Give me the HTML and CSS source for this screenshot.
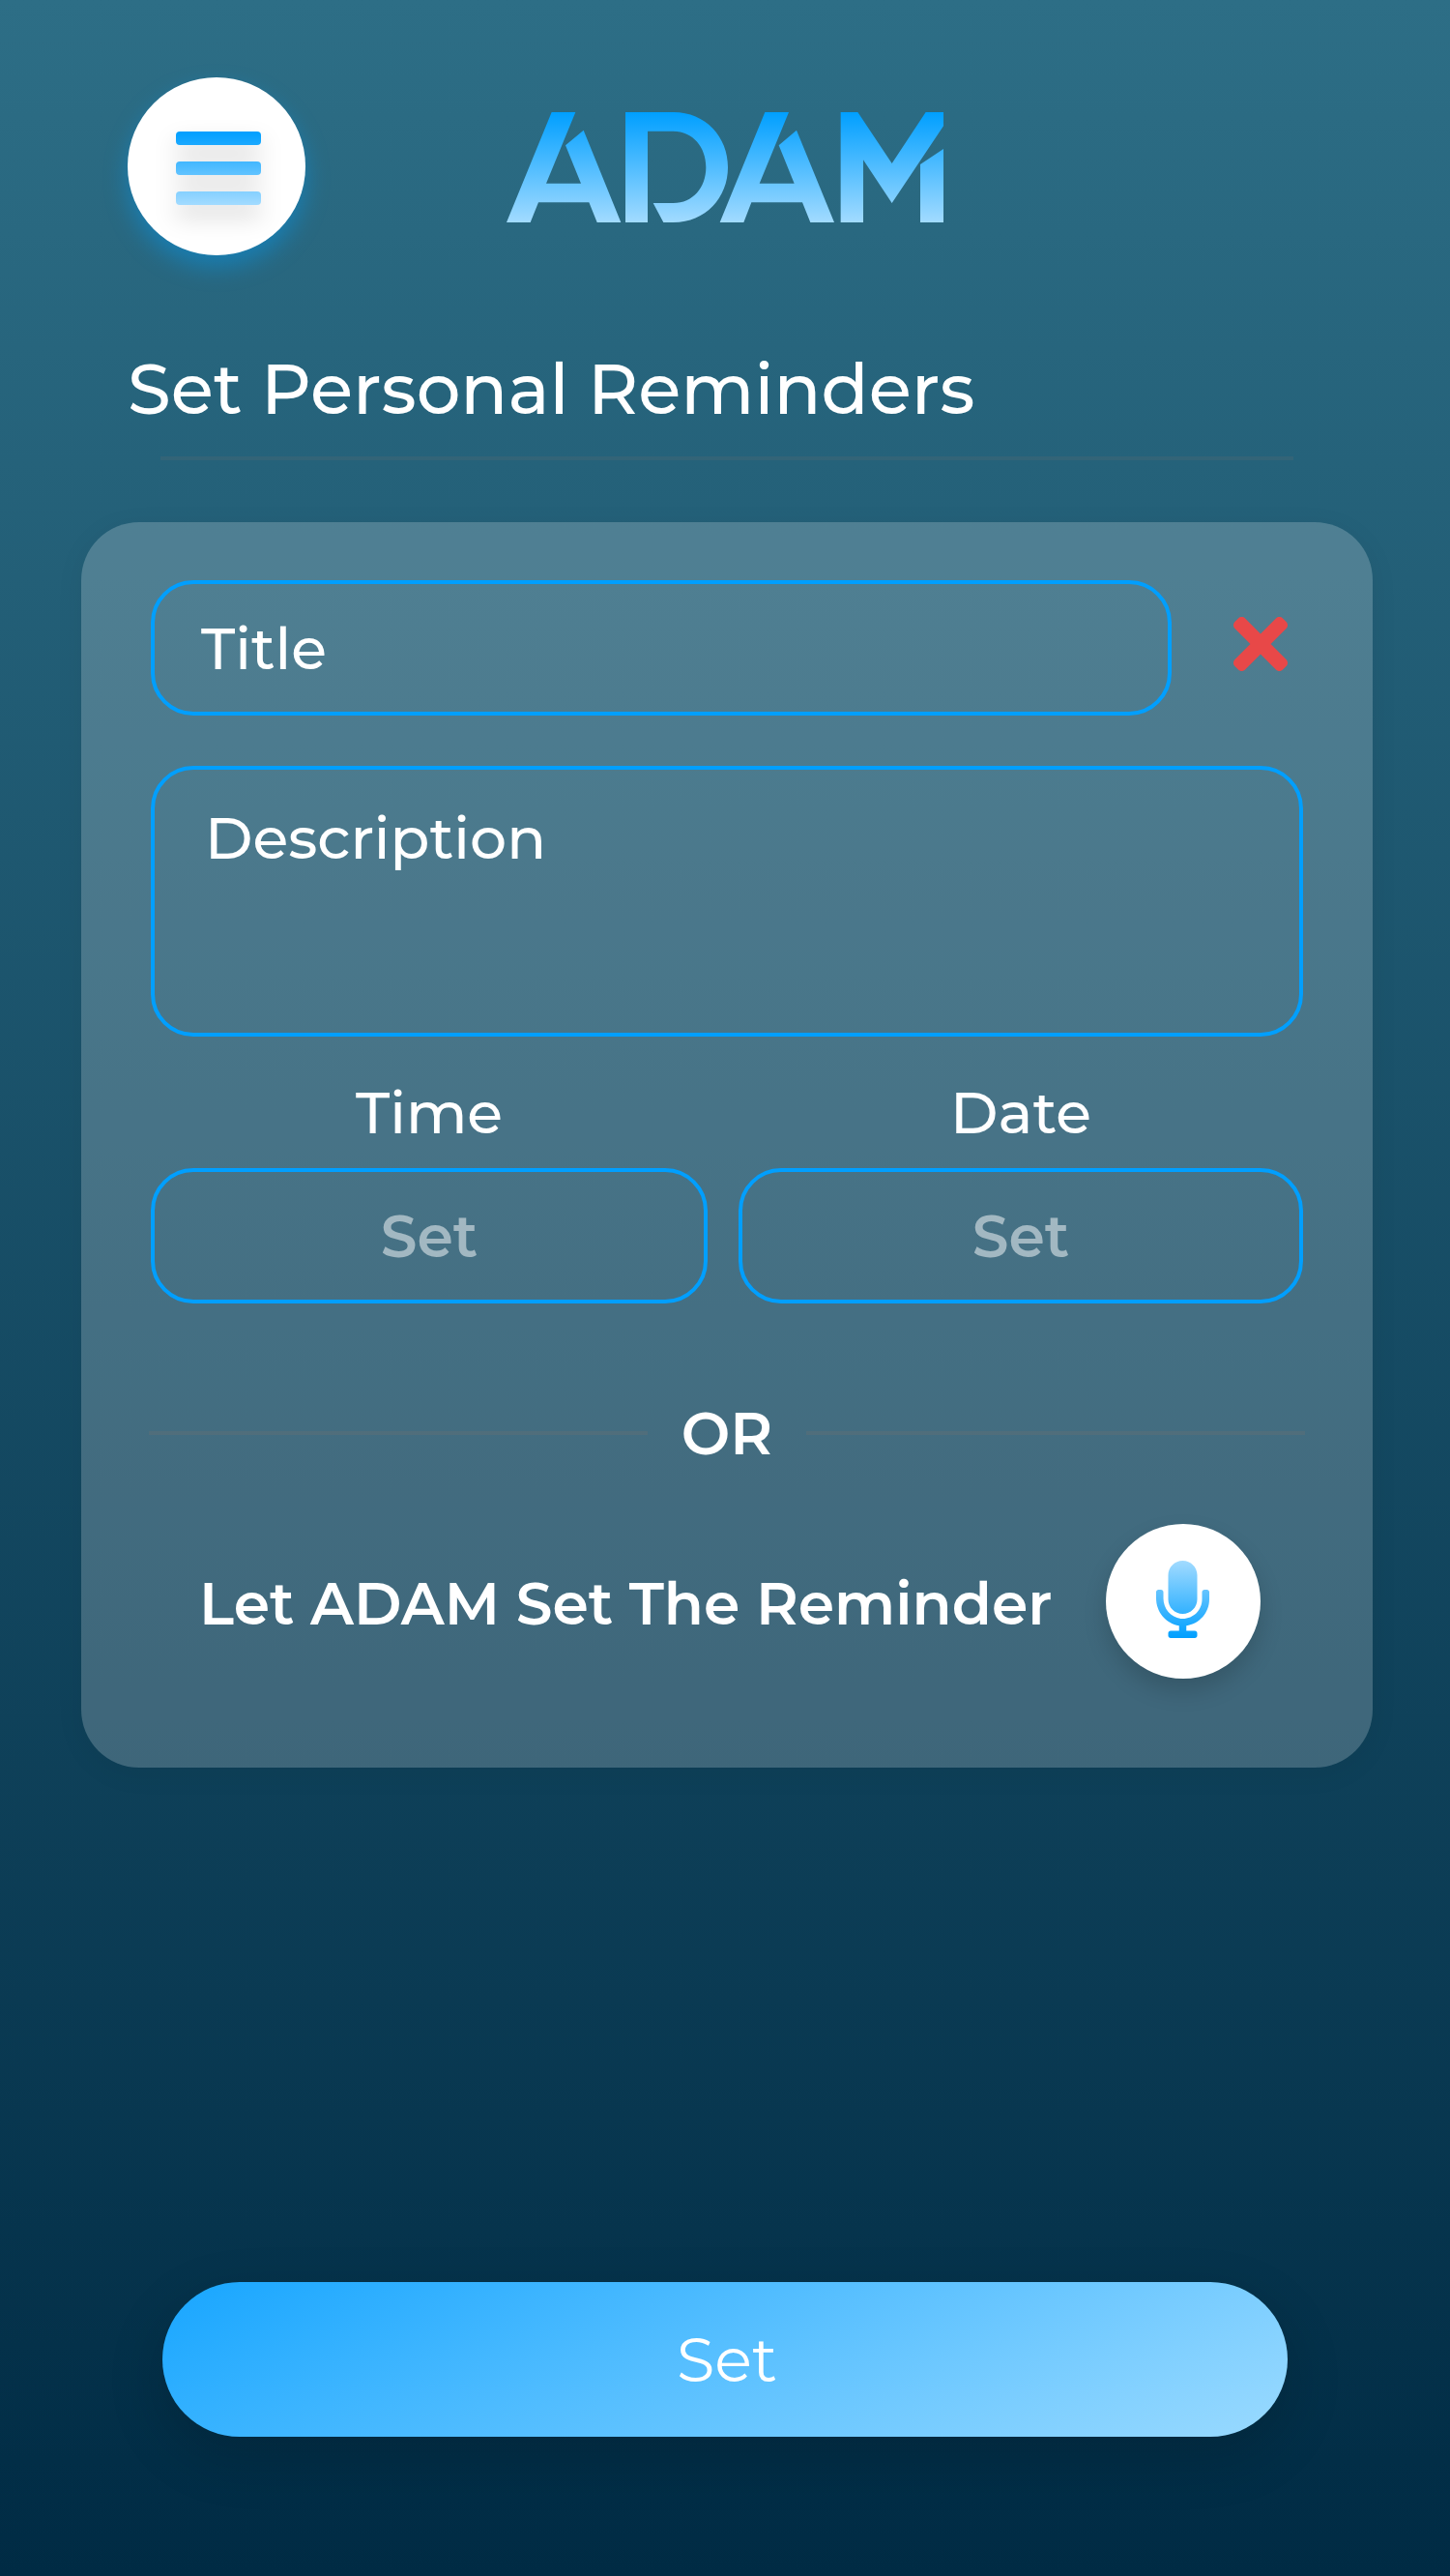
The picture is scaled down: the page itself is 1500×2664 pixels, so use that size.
FILE: index.html
```html
<!DOCTYPE html>
<html lang="en">
<head>
<meta charset="utf-8">
<title>ADAM – Set Personal Reminders</title>
<link rel="stylesheet" href="styles.css">
</head>
<body>
<main class="screen">
  <header class="topbar">
    <button class="menu-button" aria-label="Menu">
      <span class="menu-bars">
        <span class="bar bar-top"></span>
        <span class="bar bar-middle"></span>
        <span class="bar bar-bottom"></span>
      </span>
    </button>
    <svg class="logo" viewBox="72 78 1356 342" role="img" aria-label="ADAM">
      <defs>
        <linearGradient id="logo-fill" gradientUnits="userSpaceOnUse" x1="0" y1="78" x2="0" y2="420">
          <stop offset="0" stop-color="#009fff"/>
          <stop offset="1" stop-color="#a2dbff"/>
        </linearGradient>
      </defs>
      <g fill="url(#logo-fill)">
        <path d="M212 78H286L195 299H303L255 181L311 134L427 420H353L328 358H171L146 420H72Z"/>
        <path d="M441 78H590C690 78 759 155 759 249S690 420 590 420H559L527 360H590C650 360 691 312 691 249S650 137 590 137H510V420H441Z"/>
        <path d="M874 78H948L857 299H965L917 181L972 134L1089 420H1015L990 358H832L808 420H734Z"/>
        <path d="M1109 78H1162L1268 237L1373 78H1428V121L1268 360L1179 226V420H1109ZM1428 192V420H1356V240Z"/>
      </g>
    </svg>
  </header>

  <h1 class="page-title">Set Personal Reminders</h1>
  <hr class="title-rule">

  <section class="card">
    <div class="title-row">
      <div class="field title-field">Title</div>
      <button class="clear-button" aria-label="Clear">
        <svg class="clear-icon" viewBox="0 80 352 352"><path fill="#e84848" d="M242.72 256l100.07-100.07c12.28-12.28 12.28-32.19 0-44.48l-22.24-22.24c-12.28-12.28-32.19-12.28-44.48 0L176 189.28 75.93 89.21c-12.28-12.28-32.19-12.28-44.48 0L9.21 111.45c-12.28 12.28-12.28 32.19 0 44.48L109.28 256 9.21 356.07c-12.28 12.28-12.28 32.19 0 44.48l22.24 22.24c12.28 12.28 32.2 12.28 44.48 0L176 322.72l100.07 100.07c12.28 12.28 32.2 12.28 44.48 0l22.24-22.24c12.28-12.28 12.28-32.19 0-44.48L242.72 256z"/></svg>
      </button>
    </div>
    <div class="field description-field">Description</div>
    <div class="schedule">
      <div class="schedule-item">
        <div class="label">Time</div>
        <div class="field picker">Set</div>
      </div>
      <div class="schedule-item">
        <div class="label">Date</div>
        <div class="field picker">Set</div>
      </div>
    </div>
    <div class="divider"><span class="line"></span><span>OR</span><span class="line"></span></div>
    <div class="voice-row">
      <span class="voice-text">Let ADAM Set The Reminder</span>
      <button class="mic-button" aria-label="Speak">
        <svg class="mic-icon" viewBox="0 0 352 512">
          <defs>
            <linearGradient id="mic-fill" x1="0" y1="0" x2="0" y2="1">
              <stop offset="0" stop-color="#a2dbff"/>
              <stop offset="1" stop-color="#009fff"/>
            </linearGradient>
          </defs>
          <path fill="url(#mic-fill)" d="M176 352c53.02 0 96-42.98 96-96V96c0-53.02-42.98-96-96-96S80 42.98 80 96v160c0 53.02 42.98 96 96 96zm160-160h-16c-8.84 0-16 7.16-16 16v48c0 74.8-64.49 134.82-140.79 127.38C96.71 376.89 48 317.11 48 250.3V208c0-8.84-7.16-16-16-16H16c-8.84 0-16 7.16-16 16v40.16c0 89.64 63.97 169.55 152 181.69V464H96c-8.84 0-16 7.16-16 16v16c0 8.84 7.16 16 16 16h160c8.84 0 16-7.16 16-16v-16c0-8.84-7.16-16-16-16h-56v-33.77C285.71 418.47 352 344.9 352 256v-48c0-8.84-7.16-16-16-16z"/>
        </svg>
      </button>
    </div>
  </section>

  <button class="submit-button">Set</button>
</main>
</body>
</html>
```
FILE: styles.css
```css
* {
  box-sizing: border-box;
}

body {
  margin: 0;
  font-family: "Montserrat", "Inter", sans-serif;
  font-weight: 500;
  color: #fff;
}

button {
  border: 0;
  padding: 0;
  margin: 0;
  background: none;
  color: inherit;
  font: inherit;
}

.screen {
  width: 1500px;
  height: 2664px;
  padding: 80px 80px 0 84px;
  display: flex;
  flex-direction: column;
  background: linear-gradient(#2d6e86, #002b44);
}

.topbar {
  display: flex;
  gap: 208px;
  height: 184px;
  padding-left: 48px;
}

.menu-button {
  width: 184px;
  height: 184px;
  padding-left: 50.3px;
  border-radius: 50%;
  background: #fff;
  box-shadow: 0 12px 24px rgba(0, 159, 255, 0.4);
}

.menu-bars {
  display: flex;
  flex-direction: column;
  gap: 17px;
  width: 87.4px;
  margin-top: 4px;
  filter: drop-shadow(0 12px 12px rgba(0, 0, 0, 0.16));
}

.bar {
  height: 14px;
  border-radius: 4px;
}

.bar-top {
  background: linear-gradient(#009fff, #1ca9ff);
}

.bar-middle {
  background: linear-gradient(#42b7ff, #61c3ff);
}

.bar-bottom {
  background: linear-gradient(#85d0ff, #a2dbff);
}

.logo {
  width: 452px;
  height: 114px;
  margin-top: 36px;
}

.page-title {
  margin: 88px 0 0 48px;
  font-size: 72px;
  line-height: 100px;
  font-weight: 500;
}

.title-rule {
  width: 1172px;
  height: 4px;
  margin: 20px 0 64px 82px;
  border: 0;
  background: rgba(112, 112, 112, 0.2);
}

.card {
  width: 1336px;
  height: 1288px;
  padding: 60px 72px 0;
  border-radius: 60px;
  background: rgba(255, 255, 255, 0.2);
  box-shadow: 0 6px 30px rgba(0, 0, 0, 0.06);
  font-size: 60px;
}

.title-row {
  display: flex;
}

.field {
  border: 4px solid #009fff;
  border-radius: 44px;
}

.title-field {
  width: 1056px;
  height: 140px;
  padding-left: 48px;
  line-height: 134px;
}

.clear-button {
  display: flex;
  margin: 38px 0 0 64px;
}

.clear-icon {
  width: 56px;
  height: 56px;
}

.description-field {
  height: 280px;
  margin-top: 52px;
  padding: 31px 0 0 52px;
  line-height: 80px;
}

.schedule {
  display: grid;
  grid-template-columns: 576px 584px;
  gap: 32px;
  margin-top: 39px;
}

.label {
  height: 80px;
  margin-bottom: 17px;
  line-height: 80px;
  text-align: center;
}

.picker {
  height: 140px;
  line-height: 133px;
  text-align: center;
  font-weight: 600;
  color: rgba(255, 255, 255, 0.5);
}

.divider {
  display: flex;
  align-items: center;
  justify-content: space-between;
  height: 80px;
  margin: 94px -2px 0;
  font-weight: 600;
}

.line {
  width: 516px;
  height: 4px;
  background: rgba(112, 112, 112, 0.3);
}

.voice-row {
  display: flex;
  justify-content: space-between;
  align-items: center;
  height: 160px;
  margin-top: 54px;
  padding: 0 44px 0 50px;
  font-weight: 600;
}

.voice-text {
  padding-top: 4px;
}

.mic-button {
  display: flex;
  align-items: center;
  justify-content: center;
  width: 160px;
  height: 160px;
  padding: 0 1px 4px 0;
  border-radius: 50%;
  background: #fff;
  box-shadow: 0 12px 24px rgba(0, 0, 0, 0.16);
}

.mic-icon {
  width: 55px;
  height: 80px;
}

.submit-button {
  width: 1164px;
  height: 160px;
  margin: 532px 0 0 84px;
  padding-left: 4px;
  border-radius: 80px;
  background: linear-gradient(154deg, #18a6ff, #9adaff);
  box-shadow: 0 20px 60px rgba(0, 0, 0, 0.16);
  font-size: 64px;
  font-weight: 400;
}
```
